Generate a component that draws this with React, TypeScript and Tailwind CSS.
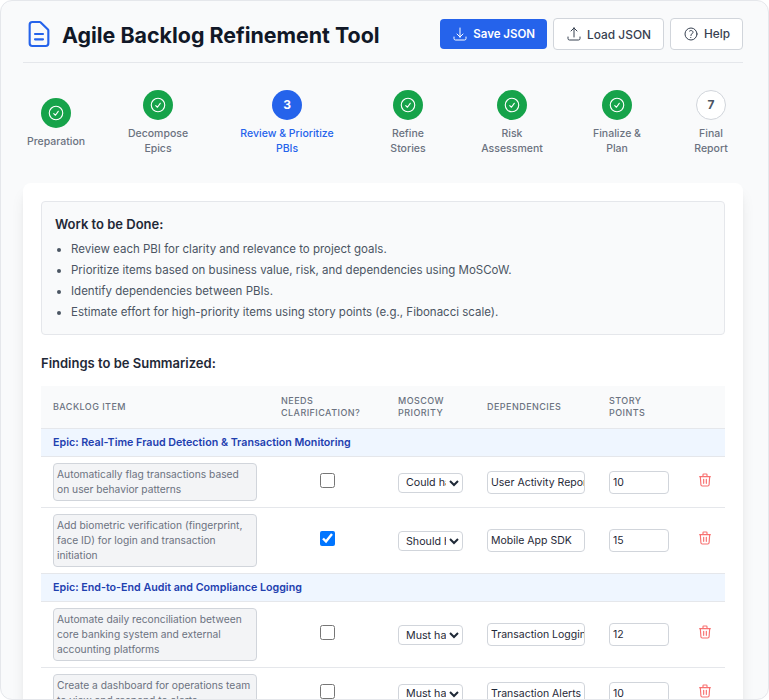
import React from "react"

const font = { fontFamily: "Inter, sans-serif" }

function Icon({ d, className, width = 1.5 }: { d: string; className: string; width?: number }) {
  return (
    <svg viewBox="0 0 24 24" fill="none" stroke="currentColor" strokeWidth={width} strokeLinecap="round" strokeLinejoin="round" className={className}>
      <path d={d} />
    </svg>
  )
}

const icons = {
  doc: "M9 12h6m-6 4h6m2 5H7a2 2 0 01-2-2V5a2 2 0 012-2h5.586a1 1 0 01.707.293l5.414 5.414a1 1 0 01.293.707V19a2 2 0 01-2 2z",
  down: "M3 16.5v2.25A2.25 2.25 0 005.25 21h13.5A2.25 2.25 0 0021 18.75V16.5M16.5 12L12 16.5m0 0L7.5 12m4.5 4.5V3",
  up: "M3 16.5v2.25A2.25 2.25 0 005.25 21h13.5A2.25 2.25 0 0021 18.75V16.5m-13.5-9L12 3m0 0l4.5 4.5M12 3v13.5",
  help: "M9.879 7.519c1.171-1.025 3.071-1.025 4.242 0 1.172 1.025 1.172 2.687 0 3.712-.203.179-.43.326-.67.442-.745.361-1.45.999-1.45 1.827v.75M21 12a9 9 0 11-18 0 9 9 0 0118 0zm-9 5.25h.008v.008H12v-.008z",
  check: "M9 12.75L11.25 15 15 9.75M21 12a9 9 0 11-18 0 9 9 0 0118 0z",
  trash: "M19 7l-.867 12.142A2 2 0 0116.138 21H7.862a2 2 0 01-1.995-1.858L5 7m5 4v6m4-6v6m1-10V4a1 1 0 00-1-1h-4a1 1 0 00-1 1v3M4 7h16",
}

const steps = [
  { label: ["Preparation"], state: "done" },
  { label: ["Decompose", "Epics"], state: "done" },
  { label: ["Review & Prioritize", "PBIs"], state: "active", n: 3 },
  { label: ["Refine", "Stories"], state: "done" },
  { label: ["Risk", "Assessment"], state: "done" },
  { label: ["Finalize &", "Plan"], state: "done" },
  { label: ["Final", "Report"], state: "todo", n: 7 },
]

const work = [
  "Review each PBI for clarity and relevance to project goals.",
  "Prioritize items based on business value, risk, and dependencies using MoSCoW.",
  "Identify dependencies between PBIs.",
  "Estimate effort for high-priority items using story points (e.g., Fibonacci scale).",
]

const rows = [
  { epic: "Epic: Real-Time Fraud Detection & Transaction Monitoring" },
  { text: "Automatically flag transactions based on user behavior patterns", lines: 2, checked: false, pri: "Could have", dep: "User Activity Reports", pts: "10" },
  { text: "Add biometric verification (fingerprint, face ID) for login and transaction initiation", lines: 3, checked: true, pri: "Should have", dep: "Mobile App SDK", pts: "15" },
  { epic: "Epic: End-to-End Audit and Compliance Logging" },
  { text: "Automate daily reconciliation between core banking system and external accounting platforms", lines: 3, checked: false, pri: "Must have", dep: "Transaction Logging", pts: "12" },
  { text: "Create a dashboard for operations team to view and respond to alerts", lines: 2, checked: false, pri: "Must have", dep: "Transaction Alerts", pts: "10" },
]

function Step({ label, state, n }: { label: string[]; state: string; n?: number }) {
  return (
    <div className="flex flex-col items-center text-center">
      {state === "done" && (
        <div className="flex h-[30px] w-[30px] items-center justify-center rounded-full bg-[#16a34a] text-white">
          <Icon d={icons.check} className="h-[18px] w-[18px]" />
        </div>
      )}
      {state === "active" && (
        <div className="flex h-[30px] w-[30px] items-center justify-center rounded-full bg-[#2563eb] text-[12px] font-bold text-white">{n}</div>
      )}
      {state === "todo" && (
        <div className="flex h-[30px] w-[30px] items-center justify-center rounded-full border border-[#d1d5db] bg-white text-[12px] font-bold text-[#4b5563]">{n}</div>
      )}
      <div className={`mt-[6px] text-[10.5px] leading-[15px] font-medium ${state === "active" ? "text-[#2563eb]" : "text-[#6b7280]"}`}>
        {label.map((l) => (
          <div key={l}>{l}</div>
        ))}
      </div>
    </div>
  )
}

export default function App() {
  return (
    <div style={font} className="h-[700px] overflow-hidden rounded-xl border border-[#e5e7eb] bg-[#f9fafb] text-[#111827]">
      <div className="pt-[17px] pr-[25px] pl-[22px]">
        <header className="flex items-center justify-between border-b border-[#e5e7eb] pb-[12px]">
          <div className="flex items-center gap-[7px]">
            <Icon d={icons.doc} width={1.6} className="h-8 w-8 text-[#2563eb]" />
            <h1 className="pt-[2px] text-[21.4px] leading-[30px] font-bold text-[#111827]">Agile Backlog Refinement Tool</h1>
          </div>
          <div className="flex items-center gap-[6px]">
            <button className="flex h-[30px] items-center gap-[5px] rounded bg-[#2563eb] px-3 text-[11.5px] font-semibold text-white">
              <Icon d={icons.down} className="h-4 w-4" />
              <span className="pt-[2px]">Save JSON</span>
            </button>
            <button className="flex h-[32px] items-center gap-[5px] rounded border border-[#d1d5db] bg-white px-3 text-[11.9px] font-medium text-[#374151]">
              <Icon d={icons.up} className="h-4 w-4" />
              <span className="pt-[2px]">Load JSON</span>
            </button>
            <button className="flex h-[32px] items-center gap-[5px] rounded border border-[#d1d5db] bg-white px-3 text-[11.8px] font-medium text-[#374151]">
              <Icon d={icons.help} className="h-4 w-4" />
              <span className="pt-[2px]">Help</span>
            </button>
          </div>
        </header>

        <nav className="mt-[27px] grid grid-cols-[66px_138px_120px_122px_86px_124px_64px] items-center">
          {steps.map((s) => (
            <Step key={s.label[0]} label={s.label} state={s.state} n={s.n} />
          ))}
        </nav>

        <main className="mt-[27px] rounded-lg bg-white p-[18px] shadow-lg">
          <section className="rounded border border-[#e5e7eb] bg-[#f9fafb] pt-[12px] pr-[12px] pb-[11px] pl-[13px]">
            <h2 className="text-[13px] leading-5 font-semibold text-[#1f2937]">Work to be Done:</h2>
            <ul className="mt-[5px] ml-[16px] list-disc text-[11.5px] leading-[21px] text-[#4b5563]">
              {work.map((w) => (
                <li key={w}>{w}</li>
              ))}
            </ul>
          </section>

          <h2 className="mt-[18px] mb-[13px] text-[13px] leading-5 font-semibold text-[#1f2937]">Findings to be Summarized:</h2>

          <table className="w-full table-fixed border-collapse">
            <colgroup>
              <col className="w-[228px]" />
              <col className="w-[117px]" />
              <col className="w-[89px]" />
              <col className="w-[122px]" />
              <col className="w-[84px]" />
              <col className="w-[44px]" />
            </colgroup>
            <thead>
              <tr className="h-[42px] bg-[#f9fafb] text-left text-[9px] leading-[12px] font-medium tracking-wider text-[#6b7280] uppercase">
                <th className="px-3 font-medium">Backlog Item</th>
                <th className="px-3 font-medium">Needs Clarification?</th>
                <th className="px-3 font-medium">MoSCoW Priority</th>
                <th className="px-3 font-medium">Dependencies</th>
                <th className="px-3 font-medium">Story Points</th>
                <th />
              </tr>
            </thead>
            <tbody>
              {rows.map((r, i) =>
                r.epic ? (
                  <tr key={i} className="h-[28px] border-y border-[#e5e7eb] bg-[#eff6ff]">
                    <td colSpan={6} className="px-3 pt-[2px] text-[10.7px] font-semibold text-[#1e40af]">{r.epic}</td>
                  </tr>
                ) : (
                  <tr key={i} className="border-b border-[#e5e7eb]">
                    <td className="px-3 py-[6px] align-middle">
                      <textarea
                        readOnly
                        value={r.text}
                        rows={r.lines}
                        className="block w-full resize-none overflow-hidden rounded border border-[#d1d5db] bg-[#f3f4f6] py-[3px] pr-[3px] pl-[3px] text-[10.25px] leading-[15px] text-[#6b7280]"
                      />
                    </td>
                    <td className="px-3 text-center">
                      <input type="checkbox" readOnly checked={r.checked} className="mb-[6px] h-[15px] w-[15px] align-middle" />
                    </td>
                    <td className="px-3 pb-[2px]">
                      <select defaultValue={r.pri} className="h-[20px] w-[65px] rounded border border-[#d1d5db] bg-white pl-[3px] text-[10.7px] text-[#1f2937]">
                        <option>Must have</option>
                        <option>Should have</option>
                        <option>Could have</option>
                        <option>Won't have</option>
                      </select>
                    </td>
                    <td className="px-3 pb-[2px]">
                      <input readOnly value={r.dep} className="h-[23px] w-full rounded border border-[#d1d5db] bg-white pl-[3px] text-[10.5px] text-[#1f2937]" />
                    </td>
                    <td className="px-3 pb-[2px]">
                      <input readOnly value={r.pts} className="h-[23px] w-[60px] rounded border border-[#d1d5db] bg-white px-[3px] text-[10.5px] text-[#1f2937]" />
                    </td>
                    <td className="pb-[4px] pl-[4px] text-center">
                      <Icon d={icons.trash} width={1.75} className="mx-auto h-4 w-4 text-[#f87171]" />
                    </td>
                  </tr>
                )
              )}
            </tbody>
          </table>
        </main>
      </div>
    </div>
  )
}
